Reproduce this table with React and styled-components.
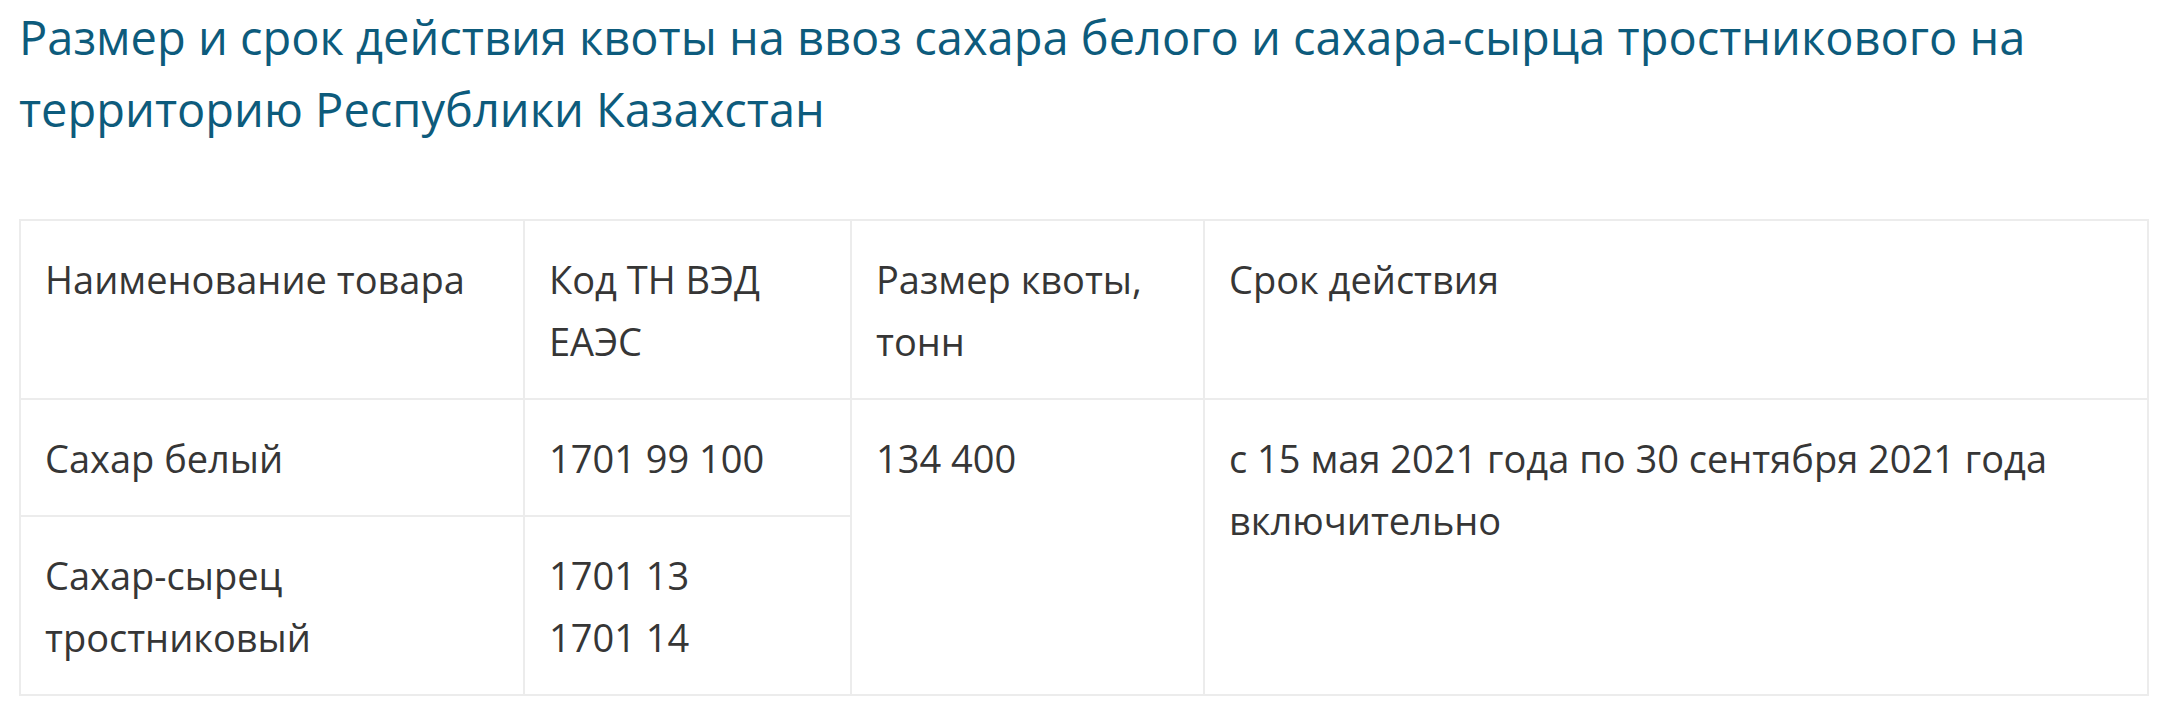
import React from "react";
import styled, { createGlobalStyle } from "styled-components";

const GlobalStyle = createGlobalStyle`
    body {
        margin: 0;
        background: #ffffff;
        font-family: "Open Sans", "Noto Sans", sans-serif;
    }
`;

const Page = styled.div`
    padding: 1px 0 0 19px;
    width: 2128px;
`;

const Title = styled.h2`
    margin: 0 0 74px 0;
    font-size: 47px;
    line-height: 72px;
    font-weight: 400;
    color: #0d5b7c;
`;

const Table = styled.table`
    width: 2128px;
    border-collapse: collapse;
    table-layout: fixed;
    border: 2px solid #ececec;
`;

const Col = styled.col`
    width: ${(p) => p.$w}px;
`;

const Cell = styled.td`
    border: 2px solid #ececec;
    padding: 27px 24px 26px 24px;
    vertical-align: top;
    font-size: 38px;
    line-height: 62px;
    color: #363636;
`;

const rows = [
    ["Сахар белый", "1701 99 100"],
    ["Сахар-сырец тростниковый", ["1701 13", "1701 14"]],
];

export default function App() {
    return (
        <Page>
            <GlobalStyle />
            <Title>
                Размер и срок действия квоты на ввоз сахара белого и сахара-сырца тростникового на территорию Республики Казахстан
            </Title>
            <Table>
                <colgroup>
                    <Col $w={504} />
                    <Col $w={327} />
                    <Col $w={353} />
                    <Col $w={944} />
                </colgroup>
                <tbody>
                    <tr>
                        <Cell>Наименование товара</Cell>
                        <Cell>Код ТН ВЭД ЕАЭС</Cell>
                        <Cell>Размер квоты, тонн</Cell>
                        <Cell>Срок действия</Cell>
                    </tr>
                    <tr>
                        <Cell>{rows[0][0]}</Cell>
                        <Cell>{rows[0][1]}</Cell>
                        <Cell rowSpan={2}>134 400</Cell>
                        <Cell rowSpan={2}>с 15 мая 2021 года по 30 сентября 2021 года включительно</Cell>
                    </tr>
                    <tr>
                        <Cell>{rows[1][0]}</Cell>
                        <Cell>
                            {rows[1][1][0]}
                            <br />
                            {rows[1][1][1]}
                        </Cell>
                    </tr>
                </tbody>
            </Table>
        </Page>
    );
}
